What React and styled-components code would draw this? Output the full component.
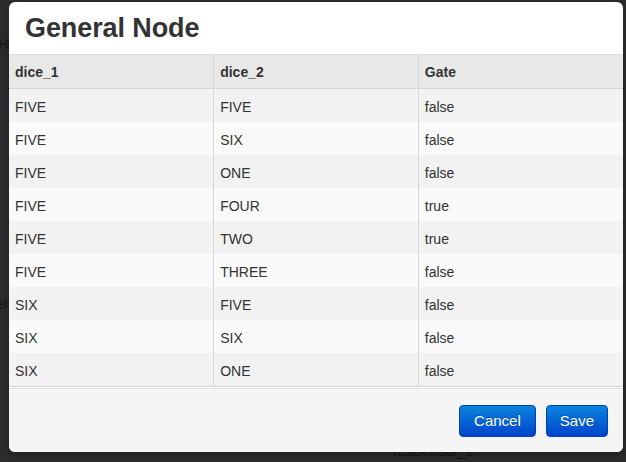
import React from "react";
import styled, { createGlobalStyle } from "styled-components";

const GlobalStyle = createGlobalStyle`
  html, body {
    margin: 0;
    padding: 0;
    background: #2c2c2c;
  }
  body {
    font-family: "Liberation Sans", Arial, sans-serif;
  }
`;

const Backdrop = styled.div`
  position: relative;
  width: 626px;
  height: 462px;
  overflow: hidden;
  background: #2c2c2c;
`;

const PageBehind = styled.div`
  display: flex;
  flex-direction: column;
  padding: 36px 0 0 0;
  font-size: 14px;
  color: #141414;
`;

const BehindLabel = styled.div`
  margin-top: ${(p) => p.$top}px;
  margin-left: ${(p) => p.$left}px;
  height: 16px;
  line-height: 16px;
  white-space: nowrap;
`;

const Modal = styled.div`
  position: absolute;
  left: 9px;
  top: 2px;
  width: 614px;
  height: 450px;
  display: flex;
  flex-direction: column;
  background: #fff;
  border-radius: 6px;
  overflow: hidden;
  box-shadow: 0 3px 7px rgba(0, 0, 0, 0.3);
`;

const Header = styled.div`
  height: 52px;
  border-bottom: 1px solid #dcdcdc;
  display: flex;
  align-items: center;
  padding-left: 16px;
`;

const Title = styled.h3`
  margin: 0;
  font-size: 27px;
  font-weight: bold;
  color: #333;
  letter-spacing: -0.1px;
`;

const Table = styled.table`
  width: 100%;
  border-collapse: collapse;
  table-layout: fixed;
  font-size: 14px;
  color: #333;
`;

const Th = styled.th`
  height: 32px;
  padding: 1px 6px 0;
  text-align: left;
  font-weight: bold;
  background: #e8e8e8;
  border-bottom: 1px solid #d6d6d6;
  border-left: 1px solid #d6d6d6;
  &:first-child {
    border-left: none;
  }
`;

const Row = styled.tr`
  background: ${(p) => (p.$odd ? "#f2f2f2" : "#fafafa")};
`;

const Td = styled.td`
  height: 30px;
  padding: 3px 6px 0;
  border-left: 1px solid #d6d6d6;
  &:first-child {
    border-left: none;
  }
`;

const TableWrap = styled.div`
  height: 331px;
  border-bottom: 1px solid #d6d6d6;
`;

const Footer = styled.div`
  flex: 1;
  display: flex;
  justify-content: flex-end;
  align-items: center;
  gap: 10px;
  padding-right: 15px;
  background: #f5f5f5;
  border-top: 1px solid #e0e0e0;
  margin-top: 1px;
`;

const Button = styled.button`
  height: 32px;
  padding: 0 ${(p) => p.$pad}px;
  font-family: "Liberation Sans", Arial, sans-serif;
  font-size: 15px;
  color: #fff;
  border: 1px solid #0042b8;
  border-radius: 4px;
  background: linear-gradient(#0a84dc, #0044cc);
  text-shadow: 0 -1px 0 rgba(0, 0, 0, 0.25);
  cursor: pointer;
`;

const rows = [
  ["FIVE", "FIVE", "false"],
  ["FIVE", "SIX", "false"],
  ["FIVE", "ONE", "false"],
  ["FIVE", "FOUR", "true"],
  ["FIVE", "TWO", "true"],
  ["FIVE", "THREE", "false"],
  ["SIX", "FIVE", "false"],
  ["SIX", "SIX", "false"],
  ["SIX", "ONE", "false"],
];

export default function App() {
  return (
    <Backdrop>
      <GlobalStyle />
      <PageBehind>
        <BehindLabel $top={0} $left={-2}>He</BehindLabel>
        <BehindLabel $top={244} $left={-4}>el</BehindLabel>
        <BehindLabel $top={131} $left={393}>testsensor_1</BehindLabel>
      </PageBehind>
      <Modal>
        <Header>
          <Title>General Node</Title>
        </Header>
        <TableWrap>
          <Table>
            <thead>
              <tr>
                <Th>dice_1</Th>
                <Th>dice_2</Th>
                <Th>Gate</Th>
              </tr>
            </thead>
            <tbody>
              {rows.map((r, i) => (
                <Row key={i} $odd={i % 2 === 0}>
                  <Td>{r[0]}</Td>
                  <Td>{r[1]}</Td>
                  <Td>{r[2]}</Td>
                </Row>
              ))}
            </tbody>
          </Table>
        </TableWrap>
        <Footer>
          <Button $pad={14}>Cancel</Button>
          <Button $pad={13}>Save</Button>
        </Footer>
      </Modal>
    </Backdrop>
  );
}
